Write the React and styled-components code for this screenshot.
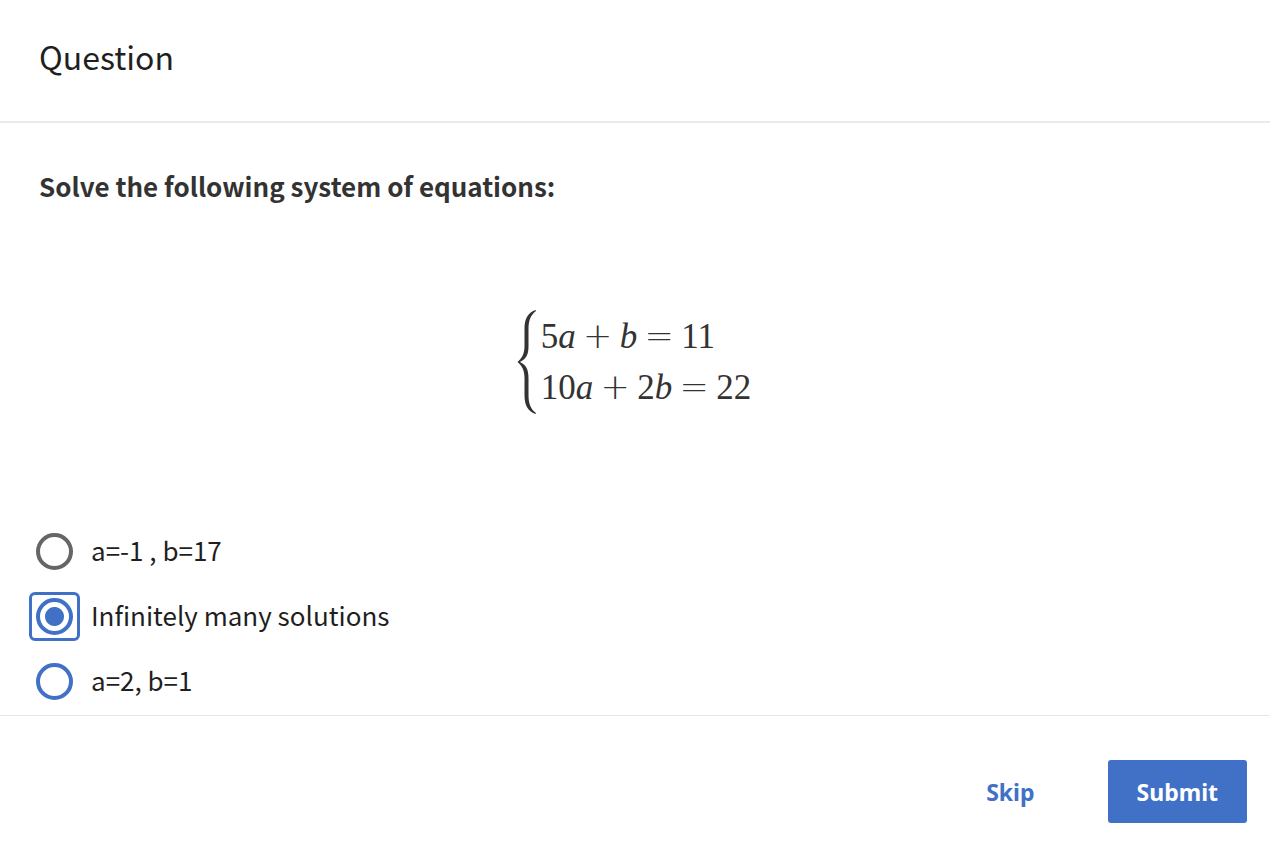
import React, { useState } from "react";
import styled, { createGlobalStyle } from "styled-components";

const GlobalStyle = createGlobalStyle`
  *, *::before, *::after { box-sizing: border-box; }
  body {
    margin: 0;
    background: #fff;
    color: #1f1f1f;
    font-family: "Noto Sans CJK SC", "Noto Sans", sans-serif;
  }
`;

const Page = styled.div`
  display: flex;
  flex-direction: column;
`;

const Header = styled.header`
  padding: 34px 39px 43px;
  border-bottom: 2px solid #ebebeb;
`;

const Title = styled.h1`
  margin: 0;
  font-size: 32px;
  font-weight: 400;
  line-height: 44px;
`;

const Body = styled.form`
  display: flex;
  flex-direction: column;
`;

const Prompt = styled.h2`
  margin: 0;
  padding: 43px 39px 0;
  color: #333;
  font-size: 26px;
  font-weight: 700;
  line-height: 40px;
`;

const System = styled.div`
  display: flex;
  justify-content: center;
  align-items: center;
  gap: 4px;
  padding: 103px 2px 112px 0;
  color: #333;
`;

const Brace = styled.svg`
  width: 20px;
  height: 106px;
`;

const Equations = styled.div`
  font-family: "Liberation Serif", serif;
  font-size: 35px;
  line-height: 51px;
`;

const Equation = styled.div`
  display: flex;
`;

const Operator = styled.span`
  width: 44px;
  text-align: center;
  font-family: "DejaVu Sans", sans-serif;
  font-weight: 200;
  font-size: 35px;
`;

const Options = styled.fieldset`
  display: flex;
  flex-direction: column;
  gap: 16px;
  margin: 0;
  padding: 0 29px 9px;
  border: 0;
`;

const Option = styled.label`
  display: flex;
  align-items: center;
  gap: 11px;
`;

const OptionText = styled.span`
  padding-bottom: 4px;
  font-size: 26px;
  line-height: 40px;
`;

const FocusBox = styled.span`
  display: flex;
  align-items: center;
  justify-content: center;
  width: 51px;
  height: 49px;
  border: 3px solid ${(p) => (p.$active ? "#4071c7" : "transparent")};
  border-radius: 6px;
`;

const Radio = styled.input`
  appearance: none;
  width: 37px;
  height: 37px;
  margin: 0;
  border: 4px solid ${(p) => p.$ring};
  border-radius: 50%;
  outline: none;
  &:checked {
    background: radial-gradient(circle, #4071c7 9px, transparent 10px);
  }
`;

const Footer = styled.footer`
  display: flex;
  justify-content: flex-end;
  align-items: center;
  gap: 44px;
  padding: 44px 23px 37px;
  border-top: 1px solid #e6e6e6;
`;

const Button = styled.button`
  height: 63px;
  padding: 0 29px;
  border: 0;
  border-radius: 3px;
  background: ${(p) => (p.$primary ? "#4071c7" : "transparent")};
  color: ${(p) => (p.$primary ? "#fff" : "#4071c7")};
  font-family: "Noto Sans", sans-serif;
  font-size: 23px;
  font-weight: 700;
  line-height: 32px;
`;

const options = [
  { id: "one", text: "a=-1 , b=17", ring: "#666" },
  { id: "many", text: "Infinitely many solutions", ring: "#4071c7" },
  { id: "two", text: "a=2, b=1", ring: "#4071c7" },
];

export default function App() {
  const [selected, setSelected] = useState("many");
  return (
    <Page>
      <GlobalStyle />
      <Header>
        <Title>Question</Title>
      </Header>
      <Body onSubmit={(e) => e.preventDefault()}>
        <Prompt id="prompt">Solve the following system of equations:</Prompt>
        <System>
          <Brace viewBox="0 0 20 106" aria-hidden="true">
            <path
              fill="currentColor"
              d="M18.5 1C10 4 7.5 11 7.5 20V37C7.5 45 5 49 .5 53C5 57 7.5 61 7.5 69V86C7.5 95 10 102 18.5 105L19 104C13.5 100 11.5 94 11.5 86V69C11.5 60 9 56 3 53C9 50 11.5 46 11.5 37V20C11.5 12 13.5 6 19 2Z"
            />
          </Brace>
          <Equations>
            <Equation>
              5<i>a</i>
              <Operator>+</Operator>
              <i>b</i>
              <Operator>=</Operator>
              11
            </Equation>
            <Equation>
              10<i>a</i>
              <Operator>+</Operator>2<i>b</i>
              <Operator>=</Operator>
              22
            </Equation>
          </Equations>
        </System>
        <Options aria-labelledby="prompt">
          {options.map((o) => (
            <Option key={o.id}>
              <FocusBox $active={selected === o.id}>
                <Radio
                  type="radio"
                  name="answer"
                  $ring={o.ring}
                  checked={selected === o.id}
                  onChange={() => setSelected(o.id)}
                />
              </FocusBox>
              <OptionText>{o.text}</OptionText>
            </Option>
          ))}
        </Options>
        <Footer>
          <Button type="button">Skip</Button>
          <Button type="submit" $primary>
            Submit
          </Button>
        </Footer>
      </Body>
    </Page>
  );
}
